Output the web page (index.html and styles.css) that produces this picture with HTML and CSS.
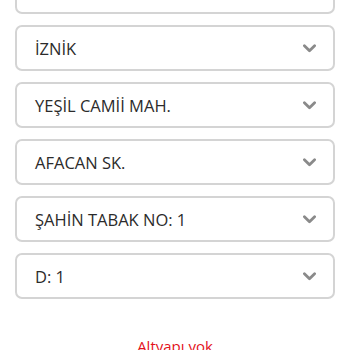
FILE: index.html
```html
<!DOCTYPE html>
<html>
<head>
  <title>Adres</title>
  <meta name="viewport" content="width=device-width, initial-scale=1.0">
  <link rel="stylesheet" href="styles.css">
</head>
<body>
  <div class="container">
    <div class="select-list">
      <div class="select-box">
        <span class="select-text">BURSA</span>
        <svg class="chevron" viewBox="0 0 14 9"><path d="M1.5 1.5 L7 7 L12.5 1.5" /></svg>
      </div>
      <div class="select-box">
        <span class="select-text">İZNİK</span>
        <svg class="chevron" viewBox="0 0 14 9"><path d="M1.5 1.5 L7 7 L12.5 1.5" /></svg>
      </div>
      <div class="select-box">
        <span class="select-text">YEŞİL CAMİİ MAH.</span>
        <svg class="chevron" viewBox="0 0 14 9"><path d="M1.5 1.5 L7 7 L12.5 1.5" /></svg>
      </div>
      <div class="select-box">
        <span class="select-text">AFACAN SK.</span>
        <svg class="chevron" viewBox="0 0 14 9"><path d="M1.5 1.5 L7 7 L12.5 1.5" /></svg>
      </div>
      <div class="select-box">
        <span class="select-text">ŞAHİN TABAK NO: 1</span>
        <svg class="chevron" viewBox="0 0 14 9"><path d="M1.5 1.5 L7 7 L12.5 1.5" /></svg>
      </div>
      <div class="select-box">
        <span class="select-text">D: 1</span>
        <svg class="chevron" viewBox="0 0 14 9"><path d="M1.5 1.5 L7 7 L12.5 1.5" /></svg>
      </div>
    </div>
    <div class="status">Altyapı yok</div>
  </div>
</body>
</html>
```

FILE: styles.css
```css
body {
  background-color: #fff;
  font-family: "Open Sans", sans-serif;
  margin: 0;
  padding: 0;
  overflow: hidden;
}

.container {
  padding: 0 15px;
}

.select-list {
  display: flex;
  flex-direction: column;
  gap: 11px;
  margin-top: -32px;
}

.select-box {
  height: 46px;
  box-sizing: border-box;
  border: 2px solid #d4d4d4;
  border-radius: 7px;
  display: flex;
  align-items: center;
  justify-content: space-between;
  padding: 0 17px 0 18px;
}

.select-text {
  font-size: 16.5px;
  color: #2b2b2b;
}

.chevron {
  width: 13px;
  height: 9px;
  fill: none;
  stroke: #8a8a8a;
  stroke-width: 3;
  stroke-linecap: round;
  stroke-linejoin: round;
}

.status {
  margin-top: 37px;
  text-align: center;
  color: #e3121b;
  font-size: 15px;
}
```
